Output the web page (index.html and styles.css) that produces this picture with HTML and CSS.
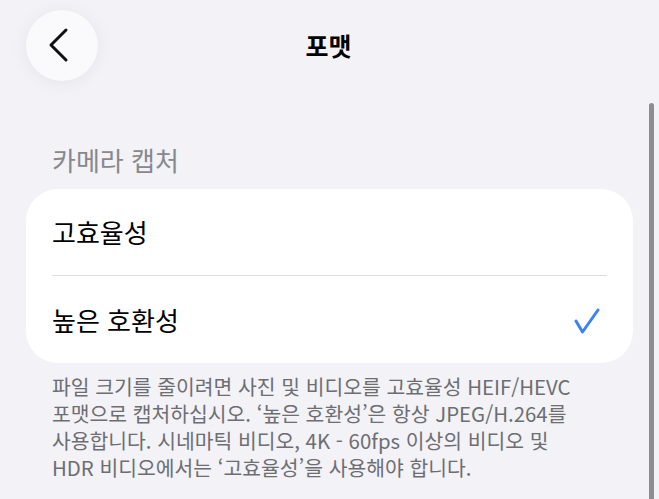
FILE: index.html
```html
<!DOCTYPE html>
<html lang="ko">
<head>
<meta charset="utf-8">
<title>포맷</title>
<link rel="stylesheet" href="styles.css">
</head>
<body>
<div class="screen">
  <header class="nav">
    <div class="nav-left">
      <button class="back" aria-label="뒤로">
        <svg width="24" height="36" viewBox="0 0 24 36"><polyline points="18,3 3,18 18,33" fill="none" stroke="#111" stroke-width="3" stroke-linecap="round" stroke-linejoin="round"/></svg>
      </button>
    </div>
    <h1 class="title">포맷</h1>
    <div class="nav-right"></div>
  </header>

  <section class="section">
    <h2 class="section-header">카메라 캡처</h2>
    <div class="card">
      <div class="row">
        <div class="row-inner"><span class="label">고효율성</span></div>
      </div>
      <div class="row last">
        <div class="row-inner">
          <span class="label">높은 호환성</span>
          <svg class="check" width="26" height="26" viewBox="0 0 26 26"><polyline points="2,13 8.5,24 24,2" fill="none" stroke="#3a82f7" stroke-width="3" stroke-linecap="round" stroke-linejoin="round"/></svg>
        </div>
      </div>
    </div>
    <p class="footer">파일 크기를 줄이려면 사진 및 비디오를 고효율성 HEIF/HEVC<br>포맷으로 캡처하십시오. ‘높은 호환성’은 항상 JPEG/H.264를<br>사용합니다. 시네마틱 비디오, 4K - 60fps 이상의 비디오 및<br>HDR 비디오에서는 ‘고효율성’을 사용해야 합니다.</p>
  </section>
  <div class="scrollbar"></div>
</div>
</body>
</html>
```
FILE: styles.css
```css
html, body {
  margin: 0;
  padding: 0;
  background: #f2f2f7;
}
body {
  font-family: "Noto Sans CJK KR", "Noto Sans", sans-serif;
  color: #000;
  width: 659px;
  height: 499px;
  overflow: hidden;
}
.screen {
  position: relative;
  height: 499px;
}
.nav {
  display: grid;
  grid-template-columns: 1fr auto 1fr;
  align-items: center;
  height: 92px;
}
.nav-left {
  padding-left: 26px;
  padding-bottom: 2px;
}
.back {
  width: 72px;
  height: 71px;
  border-radius: 50%;
  border: none;
  background: #fafafc;
  box-shadow: 0 2px 18px rgba(0,0,0,0.06);
  display: flex;
  align-items: center;
  justify-content: center;
  padding: 0 4px 0 0;
}
.title {
  margin: 0;
  font-size: 25px;
  font-weight: 700;
  line-height: 30px;
  padding-bottom: 2px;
  padding-right: 2px;
}
.section {
  padding: 0 26px;
}
.section-header {
  margin: 52px 0 0;
  padding-left: 26px;
  font-size: 26px;
  font-weight: 400;
  line-height: 32px;
  color: #88888d;
}
.card {
  margin-top: 13px;
  background: #fff;
  border-radius: 32px;
}
.row {
  padding: 0 26px;
}
.row-inner {
  display: flex;
  align-items: center;
  justify-content: space-between;
  height: 86px;
  border-bottom: 1px solid #dedee2;
  padding-right: 7px;
}
.row.last .row-inner {
  height: 87px;
  border-bottom: none;
}
.label {
  font-size: 26px;
  line-height: 32px;
}
.check {
  display: block;
  margin-top: 2px;
}
.footer {
  margin: 10px 0 0;
  padding-left: 26px;
  font-size: 20.4px;
  line-height: 27px;
  color: #6d6d72;
  white-space: nowrap;
}
.scrollbar {
  position: absolute;
  left: 649px;
  top: 103px;
  width: 5px;
  height: 400px;
  border-radius: 3px 3px 0 0;
  background: #8e8e92;
}
```
